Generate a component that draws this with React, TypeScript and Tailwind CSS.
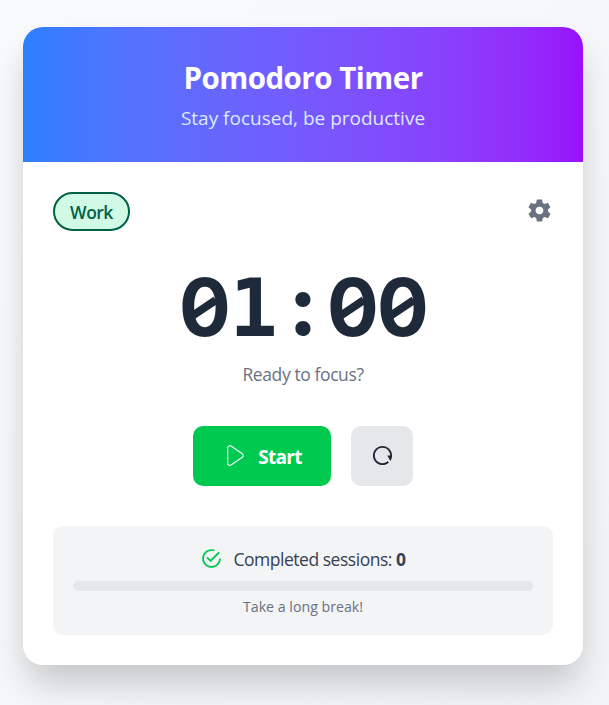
import { CiPlay1 } from "react-icons/ci";
import { IoMdCheckmarkCircleOutline, IoMdSettings } from "react-icons/io";
import { RiRestartLine } from "react-icons/ri";

function Digit({ char }: { char: string }) {
  if (char === "0") {
    return (
      <span className="relative w-[49.5px] pt-[1px] text-center font-['Inter',sans-serif] font-bold">
        <span className="-ml-[1.5px] inline-block scale-x-[0.96]">0</span>
        <span className="absolute top-[47.5px] left-[10.5px] h-[7.5px] w-[28px] rotate-[-34deg] bg-[#1e2939]" />
      </span>
    );
  }
  if (char === ":") {
    return (
      <span className="w-[49.5px] text-center font-['Inter',sans-serif] text-[82px] font-extrabold">:</span>
    );
  }
  return (
    <span className="w-[49.5px] pt-[3px] text-center font-['DejaVu_Sans_Mono',monospace]">
      {char}
    </span>
  );
}

function Clock({ value }: { value: string }) {
  return (
    <div className="mt-[25px] flex h-[100px] items-start justify-center text-[80px] leading-[100px] font-bold text-[#1e2939]">
      {value.split("").map((c, i) => (
        <Digit key={i} char={c} />
      ))}
    </div>
  );
}

export default function App() {
  return (
    <div className="h-[705px] overflow-hidden bg-linear-to-br from-gray-50 to-gray-100 pt-[27px] pl-[23px] font-['Open_Sans','Noto_Sans',sans-serif]">
      <main className="h-[638px] w-[560px] overflow-hidden rounded-[20px] bg-white shadow-[0_22px_36px_-4px_rgba(0,0,0,0.2)]">
        <header className="h-[135px] bg-linear-to-r from-[#2b7fff] to-[#9810fa] px-[30px] pt-[29px] text-center">
          <h1 className="pt-[1px] text-[29.5px] leading-[42px] font-bold tracking-[-0.5px] text-white">Pomodoro Timer</h1>
          <p className="mt-[4px] text-[19px] leading-[30px] text-blue-100">Stay focused, be productive</p>
        </header>
        <div className="px-[30px] pt-[30px]">
          <div className="flex h-[39px] items-center justify-between">
            <span className="flex h-[39px] w-[77px] items-center justify-center rounded-full border-2 border-[#006045] bg-[#d0fae5] pt-[2px] text-[17.5px] font-semibold tracking-[-0.5px] text-[#006045]">
              Work
            </span>
            <IoMdSettings className="mb-[2px] size-[27px] text-[#6a7282]" />
          </div>
          <Clock value="01:00" />
          <p className="mt-[3px] text-center text-[17.5px] leading-[30px] tracking-[-0.4px] text-[#6a7282]">Ready to focus?</p>
          <div className="mt-[37px] flex justify-center gap-[20px]">
            <button className="flex h-[60px] w-[138px] items-center justify-center gap-[10px] rounded-[10px] bg-[#00c950] pl-[1px] text-[19px] font-bold tracking-[-0.7px] text-white">
              <CiPlay1 className="mb-[1px] size-[25px]" />
              <span className="pt-[2px]">Start</span>
            </button>
            <button className="flex h-[60px] w-[62px] items-center justify-center rounded-[10px] bg-gray-200 pb-[1px] text-gray-800">
              <RiRestartLine className="size-[23px]" />
            </button>
          </div>
          <section className="mt-[40px] h-[109px] rounded-[10px] bg-gray-100 p-[20px] text-center">
            <div className="flex h-[26px] items-center justify-center gap-[10px] text-[17.5px] tracking-[-0.47px] text-gray-700">
              <IoMdCheckmarkCircleOutline className="mb-[2px] size-[23px] text-[#00c950]" />
              <span>
                Completed sessions: <b>0</b>
              </span>
            </div>
            <div className="mt-[9px] h-[10px] rounded-full bg-gray-200" />
            <p className="mt-[6px] text-[14.2px] leading-[20px] text-[#6a7282]">Take a long break!</p>
          </section>
        </div>
      </main>
    </div>
  );
}
